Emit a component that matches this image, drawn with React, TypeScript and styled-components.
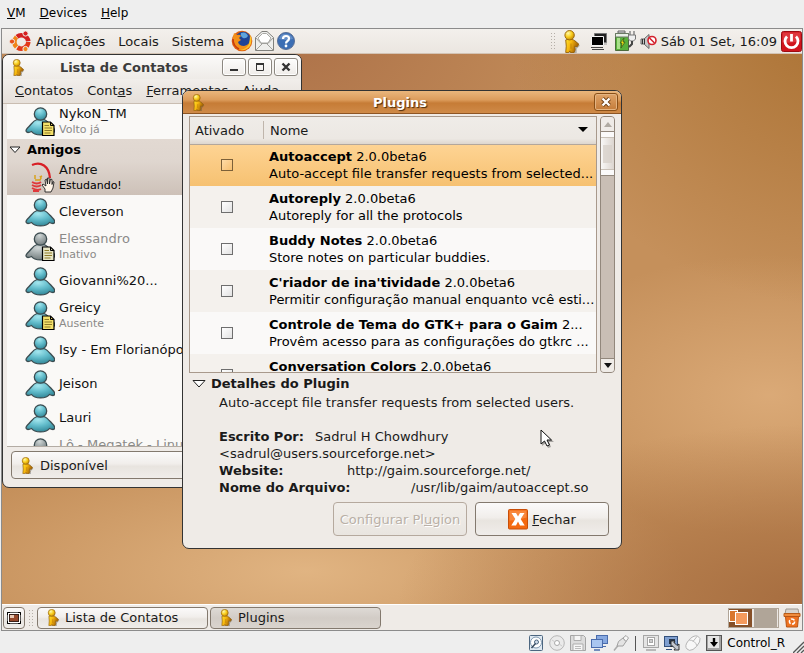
import React from "react";
import styled, { createGlobalStyle, css } from "styled-components";

const GlobalStyle = createGlobalStyle`
  *, *::before, *::after { box-sizing: border-box; }
  html, body, #root { height: 100%; }
  body {
    margin: 0;
    background: #eeeeee;
    color: #1a1a1a;
    font: 13px/17px "DejaVu Sans", "Bitstream Vera Sans", sans-serif;
    overflow: hidden;
  }
  button { font: inherit; color: inherit; cursor: default; }
  h2, h3, p, ul { margin: 0; padding: 0; }
  svg { display: block; flex: none; }
`;

const Host = styled.div`
  display: flex;
  flex-direction: column;
  height: 100vh;
`;

const HostMenu = styled.nav`
  display: flex;
  align-items: center;
  gap: 14px;
  height: 28px;
  padding: 0 7px 2px;
  font-size: 12px;
  color: #000;
`;

const PlainButton = styled.button`
  display: flex;
  align-items: center;
  padding: 0;
  border: 0;
  background: none;
  white-space: nowrap;
`;

const Guest = styled.main`
  flex: 1;
  display: flex;
  flex-direction: column;
  min-height: 0;
  margin: 0 1px;
  border: 1px solid #8b8b8b;
`;

const TopPanel = styled.header`
  display: flex;
  align-items: center;
  justify-content: space-between;
  height: 25px;
  padding: 0 0 0 7px;
  background: linear-gradient(#f3f0ec, #ebe6e0);
  border-bottom: 1px solid #d3c3b4;
`;

const PanelMenu = styled.nav`
  display: flex;
  align-items: center;
  gap: 13px;
`;

const MenuWithLogo = styled(PlainButton)`
  gap: 5px;
`;

const Launchers = styled.div`
  display: flex;
  align-items: center;
  gap: 1px;
  margin-left: -6px;
`;

const Tray = styled.div`
  display: flex;
  align-items: center;
  gap: 4px;
`;

const Clock = styled.time`
  font-size: 13px;
`;

const Grip = styled.span`
  width: 6px;
  height: 18px;
  background-image: radial-gradient(circle, #b5afa8 1px, transparent 1px);
  background-size: 3px 3px;
`;

const Desktop = styled.section`
  flex: 1;
  position: relative;
  min-height: 0;
  overflow: hidden;
  background:
    radial-gradient(ellipse 360px 300px at 108% -8%, rgba(163, 105, 40, 0.85), rgba(163, 105, 40, 0) 100%),
    radial-gradient(ellipse 360px 240px at 34% -4%, rgba(164, 102, 66, 0.75), rgba(164, 102, 66, 0) 100%),
    radial-gradient(ellipse 420px 180px at 102% 100%, rgba(160, 102, 58, 0.85), rgba(160, 102, 58, 0) 100%),
    radial-gradient(ellipse 260px 140px at 96% 62%, rgba(222, 174, 124, 0.85), rgba(222, 174, 124, 0) 100%),
    radial-gradient(ellipse 380px 130px at 38% 94%, rgba(226, 182, 132, 0.95), rgba(226, 182, 132, 0) 100%),
    #c5905b;
`;

const frame = css`
  position: absolute;
  display: flex;
  flex-direction: column;
  border: 1px solid #333;
  border-radius: 7px;
  background: #efebe7;
  overflow: hidden;
`;

const ContactsWindow = styled.section`
  ${frame}
  left: 0;
  top: 0;
  width: 300px;
  height: 434px;
`;

const PluginsWindow = styled.section`
  ${frame}
  left: 180px;
  top: 36px;
  width: 440px;
  height: 459px;
`;

const TitleBar = styled.div<{ $active?: boolean }>`
  display: flex;
  align-items: center;
  flex: none;
  gap: 2px;
  height: ${(p) => (p.$active ? 23 : 24)}px;
  padding: 0 3px 0 8px;
  ${(p) =>
    p.$active
      ? css`
          color: #fff;
          background: linear-gradient(#eab67c 0, #dc9c5c 40%, #c67c36 55%, #cf8a48 100%);
          border-bottom: 1px solid #8d5524;
          text-shadow: 1px 1px 1px #4a2a0c;
        `
      : css`
          color: #3c3c3c;
          background: linear-gradient(#fbfaf9, #eeebe7);
        `}
`;

const Title = styled.h2`
  flex: 1;
  text-align: center;
  font-size: 13px;
  line-height: 17px;
  font-weight: bold;
`;

const WinButton = styled.button<{ $active?: boolean }>`
  display: grid;
  place-items: center;
  width: 24px;
  height: 18px;
  padding: 0;
  border: 1px solid ${(p) => (p.$active ? "#8a5018" : "#8c8881")};
  border-radius: 3px;
  background: ${(p) =>
    p.$active ? "linear-gradient(#e0a468, #c47c3a)" : "linear-gradient(#fdfdfc, #efece9)"};
  box-shadow: inset 0 0 0 1px ${(p) => (p.$active ? "#e4b482" : "#fff")};
`;

const WindowMenu = styled.nav`
  display: flex;
  flex: none;
  gap: 14px;
  padding: 3px 12px 4px;
  border-bottom: 1px solid #c9bdb1;
  background: linear-gradient(#f1eeeb, #e6e0da);
`;

const BuddyList = styled.ul`
  flex: 1;
  min-height: 0;
  margin: 0 4px;
  overflow: hidden;
  list-style: none;
  background: #faf9f7;
  border-bottom: 1px solid #b3aca4;
`;

const GroupBand = styled.li`
  background: linear-gradient(#e2d9d2, #dfd6cf 40%, #cdc1b8);
`;

const GroupTitle = styled.h3`
  display: flex;
  align-items: center;
  gap: 6px;
  height: 21px;
  padding-left: 2px;
  font-size: 13px;
  font-weight: bold;
  color: #000;
`;

const BuddyRow = styled.div<{ $tall?: boolean }>`
  display: flex;
  align-items: center;
  gap: 4px;
  height: ${(p) => (p.$tall ? 35 : 34)}px;
  padding-left: 17px;
  white-space: nowrap;
`;

const BuddyText = styled.div`
  display: flex;
  flex-direction: column;
`;

const BuddyName = styled.span<{ $dim?: boolean }>`
  line-height: 16px;
  color: ${(p) => (p.$dim ? "#8a8a88" : "#111")};
`;

const BuddyStatus = styled.span<{ $dark?: boolean }>`
  font-size: 11px;
  line-height: 15px;
  color: ${(p) => (p.$dark ? "#000" : "#8a8a88")};
`;

const StatusArea = styled.div`
  padding: 4px 8px 8px;
`;

const bevel = css`
  border: 1px solid #83796e;
  border-radius: 4px;
  background: linear-gradient(#fbfafa, #f1eeeb 45%, #e8e4df 55%, #f0edea);
`;

const StatusButton = styled.button`
  ${bevel}
  display: flex;
  align-items: center;
  gap: 5px;
  width: 100%;
  height: 28px;
  padding: 0 8px;
`;

const PluginsBody = styled.div`
  flex: 1;
  display: flex;
  flex-direction: column;
  min-height: 0;
  padding: 2px 6px 12px;
`;

const ListArea = styled.div`
  display: flex;
  gap: 3px;
  height: 257px;
`;

const TreeFrame = styled.div`
  flex: 1;
  min-width: 0;
  overflow: hidden;
  border: 1px solid #a8998c;
  background: #f4f1ed;
`;

const PluginTable = styled.table`
  width: 100%;
  table-layout: fixed;
  border-collapse: collapse;
`;

const HeadCell = styled.th<{ $w?: number }>`
  height: 27px;
  width: ${(p) => (p.$w ? p.$w + "px" : "auto")};
  padding: 0;
  font-weight: normal;
  text-align: left;
  background: linear-gradient(#efece8, #ece8e3 80%, #ddd6cf);
  border-bottom: 1px solid #b3a79c;
`;

const HeadLabel = styled.span<{ $divider?: boolean }>`
  display: flex;
  align-items: center;
  justify-content: space-between;
  height: 18px;
  padding: 0 8px 0 5px;
  ${(p) => p.$divider && "padding-left: 6px; border-left: 1px solid #bfb5ab;"}
`;

const PluginRow = styled.tr<{ $selected?: boolean }>`
  height: 42px;
  color: #000;
  background: ${(p) => (p.$selected ? "linear-gradient(#fed494, #f6c171)" : "#f4f1ed")};
  &:nth-child(odd) {
    ${(p) => !p.$selected && "background: #faf9f8;"}
  }
`;

const CheckCell = styled.td`
  padding: 0;
  line-height: 0;
  text-align: center;
`;

const Check = styled.input<{ $selected?: boolean }>`
  appearance: none;
  width: 12px;
  height: 12px;
  margin: 0;
  border: 1px solid ${(p) => (p.$selected ? "#7c6038" : "#6e6e6e")};
  background: ${(p) =>
    p.$selected ? "linear-gradient(135deg, #ffdba6, #f6bf70)" : "linear-gradient(135deg, #fff, #e2e2e2)"};
`;

const TextCell = styled.td`
  padding: 0 0 0 6px;
`;

const Line = styled.div`
  min-height: 17px;
  white-space: nowrap;
`;

const Scrollbar = styled.div`
  display: flex;
  flex-direction: column;
  width: 15px;
  border: 1px solid #92877c;
  border-radius: 4px;
  background: #c9beb5;
  overflow: hidden;
`;

const ScrollButton = styled.button<{ $end?: boolean }>`
  display: grid;
  place-items: center;
  height: 14px;
  flex: none;
  padding: 0;
  border: 0;
  background: #efebe7;
  ${(p) => p.$end && "margin-top: auto; border-top: 1px solid #92877c;"}
`;

const ScrollThumb = styled.div`
  display: grid;
  place-items: center;
  height: 45px;
  border: solid #92877c;
  border-width: 1px 0;
  background: linear-gradient(#fbfafa 5px, #c9c1b8 5px 6px, transparent 6px 37px, #c9c1b8 37px 38px, #fbfafa 38px),
    linear-gradient(90deg, #f9f8f7, #dcd5cf);
`;

const ThumbDots = styled.span`
  width: 9px;
  height: 18px;
  background-color: #d9d2cb;
  background-image: linear-gradient(90deg, #fff 2px, transparent 2px), linear-gradient(#fff 2px, transparent 2px);
  background-size: 3px 3px;
  background-blend-mode: multiply;
  opacity: 0.8;
`;

const Expander = styled.button`
  display: flex;
  align-items: center;
  gap: 5px;
  margin-top: 2px;
  padding: 0 0 0 3px;
  border: 0;
  background: none;
  font-weight: bold;
`;

const Details = styled.div`
  padding: 2px 0 0 30px;
  white-space: pre-wrap;
  tab-size: 32px;
`;

const Summary = styled.p`
  margin-bottom: 17px;
`;

const Actions = styled.div`
  display: flex;
  justify-content: flex-end;
  gap: 8px;
  margin-top: auto;
  padding-right: 6px;
`;

const ActionButton = styled.button`
  ${bevel}
  display: flex;
  align-items: center;
  justify-content: center;
  gap: 4px;
  width: 134px;
  height: 34px;
  padding: 0;
  white-space: nowrap;
  &:disabled {
    color: #b9b0a7;
    border-color: #b5a99e;
    background: linear-gradient(#f1eeea, #e9e5e0);
    text-shadow: 1px 1px 0 #fff;
  }
`;

const Pointer = styled.div`
  position: absolute;
  left: 538px;
  top: 375px;
`;

const BottomPanel = styled.footer`
  display: flex;
  align-items: center;
  gap: 3px;
  height: 26px;
  padding: 0 1px;
  background: #efebe7;
  border-top: 1px solid #fff;
`;

const ShowDesktop = styled.button`
  ${bevel}
  display: grid;
  place-items: center;
  width: 22px;
  height: 22px;
  padding: 0;
`;

const TaskButton = styled.button<{ $pressed?: boolean }>`
  ${bevel}
  display: flex;
  align-items: center;
  gap: 4px;
  flex: 0 1 171px;
  height: 22px;
  padding: 0 8px;
  ${(p) => p.$pressed && "background: linear-gradient(#dedad5, #d2ccc6 50%, #dad4ce);"}
`;

const Tasks = styled.div`
  display: flex;
  flex: 1;
  gap: 2px;
`;

const PanelEnd = styled.div`
  display: flex;
  align-items: center;
  gap: 4px;
`;

const HostStatus = styled.footer`
  display: flex;
  align-items: center;
  justify-content: flex-end;
  gap: 5px;
  height: 22px;
  padding-top: 2px;
  font-size: 12px;
  color: #000;
`;

const StatusSeparator = styled.span`
  width: 1px;
  height: 15px;
  margin: 0 2px 0 1px;
  background: #555;
`;

const HostKey = styled.span`
  margin-right: 3px;
`;

const Mn = ({ before = "", k, after = "" }: { before?: string; k: string; after?: string }) => (
  <span>
    {before}
    <u>{k}</u>
    {after}
  </span>
);

const Man = ({ w = 15, h = 17 }: { w?: number; h?: number }) => (
  <svg width={w} height={h} viewBox="0 0 17 22" aria-hidden="true">
    <defs>
      <linearGradient id="manBody" x1="0" x2="1" y1="0" y2="0.4">
        <stop offset="0" stopColor="#ffe62e" />
        <stop offset="0.45" stopColor="#f6b60e" />
        <stop offset="1" stopColor="#9c5a06" />
      </linearGradient>
      <radialGradient id="manHead" cx="0.35" cy="0.3" r="0.8">
        <stop offset="0" stopColor="#fff9a8" />
        <stop offset="0.5" stopColor="#f8cc1a" />
        <stop offset="1" stopColor="#b87a08" />
      </radialGradient>
    </defs>
    <path d="M6 10h6l4 5-3 3v4H6z" fill="#444" opacity="0.35" />
    <path
      d="M2.500 9.500Q6 7.500 10 9.500l5 4-1.500 2.500-2.500-.5.500 3.500-1 2.500H7l-.5-1.500-1 1.500H2.500l.5-6z"
      fill="url(#manBody)"
      stroke="#99640a"
      strokeWidth="0.9"
    />
    <path d="M7.500 13v5" stroke="#a86c08" strokeWidth="1" opacity="0.6" />
    <circle cx="6.200" cy="5" r="4.500" fill="url(#manHead)" stroke="#99640a" strokeWidth="0.9" />
  </svg>
);

type Badge = "note" | "graynote" | undefined;

const Buddy = ({ gray, badge }: { gray?: boolean; badge?: Badge }) => {
  const id = gray ? "buddyGray" : "buddyTeal";
  return (
    <svg width="31" height="31" viewBox="0 0 31 31" aria-hidden="true">
      <defs>
        <radialGradient id={id} cx="0.42" cy="0.22" r="0.85">
          <stop offset="0" stopColor={gray ? "#cfd6d6" : "#a4e6ee"} />
          <stop offset="0.45" stopColor={gray ? "#a1aaab" : "#62bccb"} />
          <stop offset="1" stopColor={gray ? "#6c7576" : "#2b7f90"} />
        </radialGradient>
      </defs>
      <path
        d="M13 13.500C8.500 15 7.500 18.500 3.500 22c-2.500 2.500-1.500 4.500.5 4.500 1.500 0 2.500-.5 3.500-1 3 4.500 15 4.500 18 0 1 .5 2 1 3.500 1 2 0 2.500-2 .500-4.500C26 18.500 24 15 20 13.500z"
        fill={`url(#${id})`}
        stroke="#3c4c50"
        strokeWidth="1.300"
      />
      <circle cx="16.500" cy="8" r="6.200" fill={`url(#${id})`} stroke="#3c4c50" strokeWidth="1.300" />
      {badge && (
        <g>
          <path
            d="M18.500 16h8l3.500 3.500v10H18.500z"
            fill={badge === "note" ? "#f3e06a" : "#e6e5c4"}
            stroke="#000"
            strokeWidth="1.200"
          />
          <path d="M26.500 16v3.500H30" fill="none" stroke="#000" />
          <path d="M20.500 19.500h4.500M20.500 22h7.500M20.500 24.500h7.500M20.500 27h6" stroke="#8d7a28" />
        </g>
      )}
    </svg>
  );
};

const Cup = () => (
  <svg width="31" height="31" viewBox="0 0 31 31" aria-hidden="true">
    <path d="M8 3C17-1 25 4 26 16" fill="none" stroke="#d81f26" strokeWidth="2.200" />
    <path d="M11 13v4M11 18h5l1-2-1-2M16 15l2-1" fill="none" stroke="#d9a21b" strokeWidth="1.500" />
    <path d="M8 20q5 3 9 0M8 23q5 3 9 0M8 26q5 3 9 1M9 29h6" fill="none" stroke="#e0393c" strokeWidth="1.800" />
    <path
      d="M21 30v-3l-3-4 1-1 3 2-1-6 1.500-1 1 5v-6H25l.5 6 1-5 1.500.5v5l1-3 1 .5-1 6-2 4z"
      fill="#fff4e8"
      stroke="#222"
      strokeWidth="0.900"
    />
  </svg>
);

const Triangle = () => (
  <svg width="12" height="8" viewBox="0 0 12 8" aria-hidden="true">
    <path d="M1 1h10L6 6.500z" fill="#fff" stroke="#222" />
  </svg>
);

const CloseGlyph = ({ light }: { light?: boolean }) => (
  <svg width="10" height="10" viewBox="0 0 10 10" aria-hidden="true">
    {light && <path d="M1.500 1.500l7 7M8.500 1.500l-7 7" stroke="#6b3b10" strokeWidth="4" />}
    <path d="M1.500 1.500l7 7M8.500 1.500l-7 7" stroke={light ? "#fff" : "#333"} strokeWidth="2.400" />
  </svg>
);

const UbuntuLogo = () => (
  <svg width="22" height="22" viewBox="0 0 22 22" aria-hidden="true">
    <g fill="none" strokeWidth="4.500">
      <path d="M8 6.800a7 7 0 0 1 11.300 4.500" stroke="#d42020" />
      <path d="M19.300 12A7 7 0 0 1 8.500 17.500" stroke="#e23818" />
      <path d="M7.500 17a7 7 0 0 1 0-10" stroke="#f08418" />
    </g>
    <g stroke="#efebe7" strokeWidth="1">
      <circle cx="3" cy="11.500" r="2.600" fill="#e8501c" />
      <circle cx="16.500" cy="3.500" r="2.600" fill="#d42020" />
      <circle cx="16.500" cy="19" r="2.600" fill="#f08418" />
    </g>
  </svg>
);

const Firefox = () => (
  <svg width="22" height="22" viewBox="0 0 22 22" aria-hidden="true">
    <circle cx="11" cy="11" r="10.300" fill="#e0600e" />
    <circle cx="12" cy="9.500" r="7.800" fill="#1f4496" />
    <path d="M10 3q5-2 7 3-2 3-5 2-3-2-2-5z" fill="#5fa4dc" />
    <path d="M3 3l3 2q3-1 4 1l-2 2 2 2-3 2q1 4 6 4 5-1 6-5 1 5-3 8-6 3-11-1Q0 12 3 3z" fill="#f39019" />
    <path d="M19 5q3 5 0 11-4 5-10 4 7-1 9-6 1-5 1-9z" fill="#fbc62c" />
    <path d="M2 9q0 7 6 10" fill="none" stroke="#c63a10" strokeWidth="1.500" />
  </svg>
);

const Mail = () => (
  <svg width="21" height="22" viewBox="0 0 21 22" aria-hidden="true">
    <path d="M1.500 7.500L8 1.500h5l6.500 6v13h-18z" fill="#eeeeec" stroke="#80807c" />
    <path d="M4 8l4.500-4.500h4L17 8l-3 5H7z" fill="#fff" stroke="#a8a8a4" />
    <path d="M2 8l5 5.500h7L19 8M2 20l6-6M19 20l-6-6" fill="none" stroke="#a0a09c" />
  </svg>
);

const HelpIcon = () => (
  <svg width="20" height="20" viewBox="0 0 20 20" aria-hidden="true">
    <circle cx="10" cy="10" r="8.500" fill="#3c6eb4" stroke="#5a7096" />
    <path d="M3 8q2-6 8-5 5 1 6 5-7 2-14 0z" fill="#7ba2d4" opacity="0.600" />
    <path d="M7 8q0-3 3-3t3 2.500q0 1.500-1.500 2.500-1.500 1-1.500 2.500" fill="none" stroke="#fff" strokeWidth="2.200" />
    <circle cx="10" cy="15" r="1.400" fill="#fff" />
  </svg>
);

const Network = () => (
  <svg width="22" height="20" viewBox="0 0 22 20" aria-hidden="true">
    <path d="M6.500 2.500h12v9h-12z" fill="#222" stroke="#777" />
    <path d="M3.500 5.500h12v9h-12z" fill="#000" stroke="#f4f4f4" />
    <path d="M3 16.500h12M4 18.500h12" stroke="#444" />
    <path d="M16 13h3" stroke="#999" />
  </svg>
);

const Battery = () => (
  <svg width="22" height="22" viewBox="0 0 22 22" aria-hidden="true">
    <path d="M4 1h7v2H4z" fill="#ddd" stroke="#666" />
    <path d="M1.500 3.500h13v17h-13z" fill="#58b03a" stroke="#4b6b3c" />
    <path d="M1.500 3.500h13V7h-13z" fill="#e9efe6" stroke="#6b7a64" />
    <path d="M3 8h3v11H3z" fill="#a9e08a" />
    <path d="M10 8l-4 5h2l-1 5 4-6H9z" fill="#f6e216" stroke="#33591b" strokeWidth="0.800" />
    <path d="M16 1v4M20 1v4" stroke="#888" strokeWidth="1.500" />
    <path d="M14.500 5h7v4l-2 2h-3l-2-2z" fill="#eee" stroke="#777" />
    <path d="M18 11v3l-3 3" fill="none" stroke="#444" strokeWidth="2" />
  </svg>
);

const Muted = () => (
  <svg width="17" height="17" viewBox="0 0 17 17" aria-hidden="true">
    <path d="M1 6h3l5-4.500v14L4 11H1z" fill="#c8c8c8" stroke="#666" />
    <path d="M2.500 6v5M4.500 6v5" stroke="#333" />
    <circle cx="12" cy="7.500" r="4" fill="#fff" stroke="#d4202c" strokeWidth="1.600" />
    <path d="M9.500 5l5 5" stroke="#d4202c" strokeWidth="1.600" />
  </svg>
);

const Power = () => (
  <svg width="21" height="21" viewBox="0 0 21 21" aria-hidden="true">
    <rect x="0.500" y="0.500" width="20" height="20" rx="2" fill="#d0141c" stroke="#9c0c12" />
    <path d="M1.500 1.500h18v8q-9 3-18 2z" fill="#ec5a5e" opacity="0.500" />
    <path d="M6 5.500a6.500 6.500 0 1 0 9 0" fill="none" stroke="#fff" strokeWidth="2.800" />
    <path d="M10.500 3v7.500" stroke="#fff" strokeWidth="2.800" />
  </svg>
);

const CloseStock = () => (
  <svg width="20" height="21" viewBox="0 0 20 21" aria-hidden="true">
    <rect x="0.500" y="0.500" width="19" height="19.500" rx="1" fill="#f4690f" stroke="#c84e08" />
    <path d="M1.500 1.500h17v7q-8 3-17 3z" fill="#fa9a58" opacity="0.600" />
    <path d="M3.500 4h4.500l2 3.500L12 4h4.500l-3.800 6 4 6.500H12l-2-4-2 4H3.300l4-6.500z" fill="#fff" />
  </svg>
);

const DesktopIcon = () => (
  <svg width="14" height="12" viewBox="0 0 14 12" aria-hidden="true">
    <rect x="0.500" y="0.500" width="13" height="11" fill="#fff" stroke="#555" />
    <path d="M.5 3V.5H3M11 .5h2.500V3M.5 9v2.500H3M11 11.500h2.500V9" fill="none" stroke="#000" />
    <rect x="2.500" y="2.500" width="9" height="7" fill="#96482a" stroke="#3a2018" />
    <path d="M3 3h4v3H3z" fill="#e8c8b4" />
  </svg>
);

const Pager = () => (
  <svg width="51" height="20" viewBox="0 0 51 20" aria-label="Espaços de trabalho" role="img">
    <rect x="0.500" y="0.500" width="50" height="19" fill="#ece8e4" stroke="#b0a598" />
    <rect x="1" y="1" width="23" height="18" fill="#865028" />
    <rect x="26" y="1" width="23" height="18" fill="#b0a598" />
    <rect x="1.500" y="2.500" width="8" height="11" fill="#d9772e" stroke="#fff" />
    <rect x="7.500" y="4.500" width="12" height="12" fill="#f49a5c" stroke="#fff" />
  </svg>
);

const Trash = () => (
  <svg width="18" height="20" viewBox="0 0 18 20" aria-hidden="true">
    <path d="M3 1h12l1 5H2z" fill="#d8d4ce" stroke="#9c968e" />
    <path d="M1 5.500h16v3H1z" fill="#f08c3c" stroke="#b85c18" />
    <path d="M2.500 8.500h13l-1 10.500h-11z" fill="#ee7220" stroke="#b85414" />
    <circle cx="9" cy="13.500" r="2.600" fill="none" stroke="#fff" strokeWidth="1.500" strokeDasharray="4 1.400" />
  </svg>
);

const Cursor = () => (
  <svg width="14" height="20" viewBox="0 0 14 20" aria-hidden="true">
    <path d="M2 2v15l4-3 2 5 3-1-2-5h5z" fill="#000" opacity="0.300" />
    <path d="M1 1v14l3.500-3 2.500 5 2.500-1-2.500-5h4.500z" fill="#fff" stroke="#111" />
  </svg>
);

const HardDisk = () => (
  <svg width="16" height="16" viewBox="0 0 16 16" aria-hidden="true">
    <rect x="1.500" y="0.500" width="13" height="15" rx="1" fill="#dfe9f2" stroke="#4c6680" />
    <circle cx="8" cy="7.500" r="5.500" fill="#fff" stroke="#8098b0" />
    <circle cx="8.500" cy="7" r="2" fill="#cfdbe8" stroke="#4c6680" />
    <path d="M3.500 13l4-4.500" stroke="#33485e" strokeWidth="1.500" />
  </svg>
);

const Disc = () => (
  <svg width="16" height="16" viewBox="0 0 16 16" aria-hidden="true">
    <circle cx="8" cy="8" r="7.300" fill="#eaeaea" stroke="#b6b6b6" />
    <circle cx="8" cy="8" r="2.500" fill="#fff" stroke="#a8a8a8" />
    <path d="M3 5l3 2M10 9l3 2" stroke="#ccc" />
  </svg>
);

const Floppy = () => (
  <svg width="16" height="16" viewBox="0 0 16 16" aria-hidden="true">
    <path d="M.5.500h13l2 2v13H.5z" fill="#dcdcdc" stroke="#a4a4a4" />
    <path d="M4 .5h7v5H4zM3 9h10v6.500H3z" fill="#f6f6f6" stroke="#adadad" />
    <path d="M5 11.500h6M5 13.500h6" stroke="#bbb" />
  </svg>
);

const NetAdapter = () => (
  <svg width="17" height="16" viewBox="0 0 17 16" aria-hidden="true">
    <rect x="5.500" y="0.500" width="11" height="8" fill="#86a8e0" stroke="#4a6cac" />
    <path d="M11 11.500h4" stroke="#4a6cac" />
    <rect x="0.500" y="4.500" width="11" height="8" fill="#a9c6f0" stroke="#4a6cac" />
    <path d="M3 15h6" stroke="#4a6cac" strokeWidth="1.500" />
  </svg>
);

const Usb = () => (
  <svg width="16" height="16" viewBox="0 0 16 16" aria-hidden="true">
    <path d="M1 15.500l4-5" stroke="#aaa" strokeWidth="1.500" />
    <path d="M4 11l1.500-4.500L10 3l3 3.500-3 4.500z" fill="#e4e4e4" stroke="#a0a0a0" />
    <path d="M10 3l3-2.500 2.500 2.500L13 6.500z" fill="#f7f7f7" stroke="#a0a0a0" />
  </svg>
);

const Shared = () => (
  <svg width="16" height="16" viewBox="0 0 16 16" aria-hidden="true">
    <rect x="0.500" y="0.500" width="15" height="12" fill="#e4e4e4" stroke="#a6a6a6" />
    <rect x="4.500" y="2.500" width="7" height="8" fill="#fff" stroke="#a6a6a6" />
    <rect x="6.500" y="4.500" width="3" height="3" fill="#ccc" stroke="#a6a6a6" />
    <path d="M3 15h10" stroke="#a6a6a6" strokeWidth="1.500" />
  </svg>
);

const Resize = () => (
  <svg width="16" height="16" viewBox="0 0 16 16" aria-hidden="true">
    <rect x="0.500" y="1.500" width="13" height="10" fill="#7f9fd0" stroke="#33507c" />
    <path d="M2 14.500h6" stroke="#33507c" />
    <path d="M5 4h6v5H5z" fill="#26364c" />
    <path d="M7 6h4l-1 1.500 3 3 2-1.500v6h-5l1-1.500-3-3L7 12z" fill="#c4c8d0" stroke="#222" strokeWidth="0.900" />
  </svg>
);

const Mouse = () => (
  <svg width="16" height="16" viewBox="0 0 16 16" aria-hidden="true">
    <path d="M2 14Q-1 11 3.500 5.500 8 0 12.500 1q4 2 2 6-2.500 5-6.500 7.500-4 2-6-.5z" fill="#f8f8f8" stroke="#b4b4b4" />
    <path d="M4 5q6 0 8 6M8 6.500l4-5" fill="none" stroke="#bbb" />
  </svg>
);

const HostKeyIcon = () => (
  <svg width="16" height="16" viewBox="0 0 16 16" aria-hidden="true">
    <rect x="0.500" y="0.500" width="15" height="15" fill="#a4a4a4" stroke="#555" />
    <rect x="2" y="1" width="11" height="12" fill="#e6e6e6" />
    <path d="M8 3v5" stroke="#000" strokeWidth="2.400" />
    <path d="M4 7h8l-4 5z" fill="#000" />
  </svg>
);

const SizeGrip = () => (
  <svg width="11" height="20" viewBox="0 0 11 20" aria-hidden="true">
    <path d="M0 20L11 9M4 20l7-7M8 20l3-3" stroke="#555" strokeWidth="1.300" />
  </svg>
);

const plugins = [
  { name: "Autoaccept", version: "2.0.0beta6", text: "Auto-accept file transfer requests from selected..." },
  { name: "Autoreply", version: "2.0.0beta6", text: "Autoreply for all the protocols" },
  { name: "Buddy Notes", version: "2.0.0beta6", text: "Store notes on particular buddies." },
  { name: "C'riador de ina'tividade", version: "2.0.0beta6", text: "Permitir configuração manual enquanto vcê esti..." },
  { name: "Controle de Tema do GTK+ para o Gaim", version: "2...", text: "Provêm acesso para as configurações do gtkrc ..." },
  { name: "Conversation Colors", version: "2.0.0beta6", text: "" },
];

const buddies: { name: string; status?: string; gray?: boolean; badge?: Badge }[] = [
  { name: "Cleverson" },
  { name: "Elessandro", status: "Inativo", gray: true, badge: "graynote" },
  { name: "Giovanni%20..." },
  { name: "Greicy", status: "Ausente", badge: "note" },
  { name: "Isy - Em Florianópolis" },
  { name: "Jeison" },
  { name: "Lauri" },
  { name: "Lô - Megatek - Linux", status: "\u00a0", gray: true },
];

export default function App() {
  return (
    <Host>
      <GlobalStyle />
      <HostMenu aria-label="VM">
        <PlainButton><Mn k="V" after="M" /></PlainButton>
        <PlainButton><Mn k="D" after="evices" /></PlainButton>
        <PlainButton><Mn k="H" after="elp" /></PlainButton>
      </HostMenu>

      <Guest>
        <TopPanel>
          <PanelMenu>
            <MenuWithLogo><UbuntuLogo />Aplicações</MenuWithLogo>
            <PlainButton>Locais</PlainButton>
            <PlainButton>Sistema</PlainButton>
            <Launchers>
              <PlainButton aria-label="Firefox"><Firefox /></PlainButton>
              <PlainButton aria-label="E-mail"><Mail /></PlainButton>
              <PlainButton aria-label="Ajuda"><HelpIcon /></PlainButton>
            </Launchers>
          </PanelMenu>
          <Tray>
            <Grip />
            <Man w={24} h={23} />
            <Network />
            <Battery />
            <Muted />
            <Clock>Sáb 01 Set, 16:09</Clock>
            <PlainButton aria-label="Sair"><Power /></PlainButton>
          </Tray>
        </TopPanel>

        <Desktop>
          <ContactsWindow>
            <TitleBar>
              <Man />
              <Title>Lista de Contatos</Title>
              <WinButton aria-label="Minimizar">
                <svg width="10" height="10"><path d="M1 8h8" stroke="#333" strokeWidth="2" /></svg>
              </WinButton>
              <WinButton aria-label="Maximizar">
                <svg width="10" height="10"><path d="M1.500 2h7v6.500h-7z" fill="none" stroke="#333" /><path d="M1 2h8" stroke="#333" strokeWidth="2" /></svg>
              </WinButton>
              <WinButton aria-label="Fechar"><CloseGlyph /></WinButton>
            </TitleBar>
            <WindowMenu>
              <PlainButton><Mn k="C" after="ontatos" /></PlainButton>
              <PlainButton><Mn before="Cont" k="a" after="s" /></PlainButton>
              <PlainButton><Mn k="F" after="erramentas" /></PlainButton>
              <PlainButton><Mn before="A" k="j" after="uda" /></PlainButton>
            </WindowMenu>
            <BuddyList>
              <li>
                <BuddyRow $tall>
                  <Buddy badge="note" />
                  <BuddyText>
                    <BuddyName>NykoN_TM</BuddyName>
                    <BuddyStatus>Volto já</BuddyStatus>
                  </BuddyText>
                </BuddyRow>
              </li>
              <GroupBand>
                <GroupTitle><Triangle />Amigos</GroupTitle>
                <BuddyRow $tall>
                  <Cup />
                  <BuddyText>
                    <BuddyName>Andre</BuddyName>
                    <BuddyStatus $dark>Estudando!</BuddyStatus>
                  </BuddyText>
                </BuddyRow>
              </GroupBand>
              {buddies.map((b) => (
                <li key={b.name}>
                  <BuddyRow $tall={!!b.status}>
                    <Buddy gray={b.gray} badge={b.badge} />
                    <BuddyText>
                      <BuddyName $dim={b.gray}>{b.name}</BuddyName>
                      {b.status && <BuddyStatus>{b.status}</BuddyStatus>}
                    </BuddyText>
                  </BuddyRow>
                </li>
              ))}
            </BuddyList>
            <StatusArea>
              <StatusButton><Man />Disponível</StatusButton>
            </StatusArea>
          </ContactsWindow>

          <PluginsWindow role="dialog" aria-label="Plugins">
            <TitleBar $active>
              <Man />
              <Title>Plugins</Title>
              <WinButton $active aria-label="Fechar"><CloseGlyph light /></WinButton>
            </TitleBar>
            <PluginsBody>
              <ListArea>
                <TreeFrame>
                  <PluginTable>
                    <thead>
                      <tr>
                        <HeadCell $w={73}><HeadLabel>Ativado</HeadLabel></HeadCell>
                        <HeadCell>
                          <HeadLabel $divider>
                            Nome
                            <svg width="10" height="6"><path d="M0 0h10L5 5z" fill="#000" /></svg>
                          </HeadLabel>
                        </HeadCell>
                      </tr>
                    </thead>
                    <tbody>
                      {plugins.map((p, i) => (
                        <PluginRow key={p.name} $selected={i === 0}>
                          <CheckCell>
                            <Check type="checkbox" aria-label={p.name} $selected={i === 0} />
                          </CheckCell>
                          <TextCell>
                            <Line><b>{p.name}</b> {p.version}</Line>
                            <Line>{p.text}</Line>
                          </TextCell>
                        </PluginRow>
                      ))}
                    </tbody>
                  </PluginTable>
                </TreeFrame>
                <Scrollbar>
                  <ScrollButton aria-label="Rolar para cima">
                    <svg width="8" height="5"><path d="M0 5h8L4 0z" fill="#b0aaa2" /></svg>
                  </ScrollButton>
                  <ScrollThumb><ThumbDots /></ScrollThumb>
                  <ScrollButton $end aria-label="Rolar para baixo">
                    <svg width="8" height="5"><path d="M0 0h8L4 5z" fill="#111" /></svg>
                  </ScrollButton>
                </Scrollbar>
              </ListArea>
              <Expander aria-expanded="true">
                <svg width="14" height="8" viewBox="0 0 14 8"><path d="M1 .5h12L7 7z" fill="#fff" stroke="#222" /></svg>
                Detalhes do Plugin
              </Expander>
              <Details>
                <Summary>Auto-accept file transfer requests from selected users.</Summary>
                <p><b>Escrito Por:</b>{"\t"}Sadrul H Chowdhury{"\n"}&lt;sadrul@users.sourceforge.net&gt;</p>
                <p><b>Website:</b>{"\t\t"}http://gaim.sourceforge.net/</p>
                <p><b>Nome do Arquivo:</b>{"\t\t"}/usr/lib/gaim/autoaccept.so</p>
              </Details>
              <Actions>
                <ActionButton disabled><Mn before="Configurar Pl" k="u" after="gion" /></ActionButton>
                <ActionButton><CloseStock /><Mn k="F" after="echar" /></ActionButton>
              </Actions>
            </PluginsBody>
          </PluginsWindow>

          <Pointer><Cursor /></Pointer>
        </Desktop>

        <BottomPanel>
          <ShowDesktop aria-label="Mostrar área de trabalho"><DesktopIcon /></ShowDesktop>
          <Grip />
          <Tasks>
            <TaskButton><Man />Lista de Contatos</TaskButton>
            <TaskButton $pressed aria-pressed="true"><Man />Plugins</TaskButton>
          </Tasks>
          <PanelEnd>
            <Pager />
            <PlainButton aria-label="Lixeira"><Trash /></PlainButton>
          </PanelEnd>
        </BottomPanel>
      </Guest>

      <HostStatus>
        <HardDisk />
        <Disc />
        <Floppy />
        <NetAdapter />
        <Usb />
        <StatusSeparator />
        <Shared />
        <Resize />
        <Mouse />
        <HostKeyIcon />
        <HostKey>Control_R</HostKey>
        <SizeGrip />
      </HostStatus>
    </Host>
  );
}
